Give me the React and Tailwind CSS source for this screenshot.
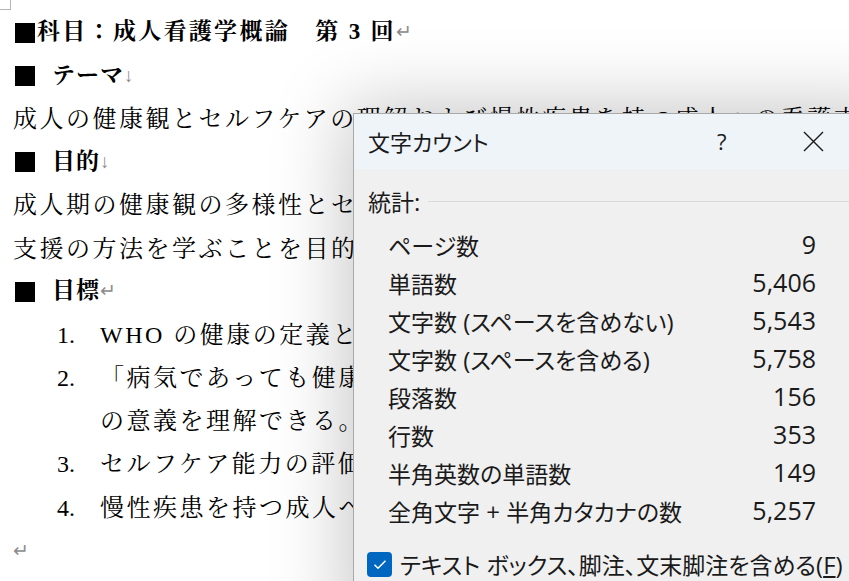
import React from 'react';

const docFont = { fontFamily: '"Liberation Serif", "Noto Serif CJK JP", "Noto Sans CJK JP", serif' };
const uiFont = { fontFamily: '"Noto Sans CJK JP", "Noto Sans", sans-serif', fontFeatureSettings: '"palt"' };
const latin = { fontFamily: '"Open Sans", "Noto Sans", sans-serif' };

function L({ children }) {
  return <span className="text-[24px] leading-none" style={latin}>{children}</span>;
}

const stats = [
  ['ページ数', '9'],
  ['単語数', '5,406'],
  [<>文字数<L> (</L>スペースを含めない<L>)</L></>, '5,543'],
  [<>文字数<L> (</L>スペースを含める<L>)</L></>, '5,758'],
  ['段落数', '156'],
  ['行数', '353'],
  ['半角英数の単語数', '149'],
  [<>全角文字<L> + </L>半角カタカナの数</>, '5,257'],
];

function Mark({ children }) {
  return <span className="text-[#8c8c8c] font-normal tracking-normal text-[19px]">{children}</span>;
}

function Line({ children, className = '' }) {
  return <div className={`h-[43.2px] flex items-center whitespace-nowrap ${className}`}>{children}</div>;
}

function Square() {
  return <span className="inline-block w-[20px] h-[20px] bg-black mr-[17px] ml-[2px]" />;
}

function Item({ n, children }) {
  return (
    <Line className="pl-[44px] text-[24px] tracking-[2.5px]">
      <span className="w-[43px] tracking-normal">{n}.</span>
      <span>{children}</span>
    </Line>
  );
}

export default function App() {
  return (
    <div className="relative w-[849px] h-[581px] overflow-hidden bg-white text-black">
      {/* crop mark */}
      <div className="absolute left-0 top-0 w-[11px] h-[10px] border-r border-b border-[#b5b5b5]" />

      <div className="pt-[11px] pl-[13px]" style={docFont}>
        <Line className="text-[23px] font-bold tracking-[2.3px]">
          <span className="inline-block w-[20px] h-[20px] bg-black ml-[2px] mr-[2px]" />
          科目：成人看護学概論　第 3 回<Mark>↵</Mark>
        </Line>
        <Line className="text-[23px] font-bold tracking-[1px]">
          <Square />テーマ<Mark>↓</Mark>
        </Line>
        <Line className="text-[24px] tracking-[2.5px]">
          成人の健康観とセルフケアの理解および慢性疾患を持つ成人への看護支援
        </Line>
        <Line className="text-[23px] font-bold tracking-[1px]">
          <Square />目的<Mark>↓</Mark>
        </Line>
        <Line className="text-[24px] tracking-[2.5px]">
          成人期の健康観の多様性とセルフケアの概念を理解し、慢性疾患を持つ成人への看護
        </Line>
        <Line className="text-[24px] tracking-[2.5px]">
          支援の方法を学ぶことを目的とする。
        </Line>
        <Line className="text-[23px] font-bold tracking-[1px]">
          <Square />目標<Mark>↵</Mark>
        </Line>
        <Item n="1">WHO の健康の定義と理解し説明できる。</Item>
        <Item n="2">「病気であっても健康である」という考え方</Item>
        <Line className="pl-[87px] text-[24px] tracking-[2.5px]">
          の意義を理解できる。<Mark>↵</Mark>
        </Line>
        <Item n="3">セルフケア能力の評価方法を説明できる。</Item>
        <Item n="4">慢性疾患を持つ成人への看護支援を考察できる。</Item>
        <Line>
          <Mark>↵</Mark>
        </Line>
      </div>

      {/* word count dialog */}
      <div
        className="absolute left-[353px] top-[113px] w-[540px] h-[520px] bg-[#f0f0f0] border border-[#a9a9a9] shadow-[0_0_70px_8px_rgba(0,0,0,0.22)]"
        style={uiFont}
      >
        <div className="h-[55px] bg-[#eff4f9] flex items-center pl-[14px] relative">
          <span className="text-[22px] text-[#1a1a1a]">文字カウント</span>
          <span className="absolute left-[363px] text-[22px] text-[#1a1a1a]" style={latin}>?</span>
          <svg className="absolute left-[449px]" width="21" height="21" viewBox="0 0 21 21">
            <path d="M1 1 L20 20 M20 1 L1 20" stroke="#1a1a1a" strokeWidth="1.4" fill="none" />
          </svg>
        </div>

        <div className="mt-[13px] h-[38px] flex items-center pl-[14px]">
          <span className="text-[23px] text-[#1a1a1a]">統計<L>:</L></span>
          <div className="ml-[8px] flex-1 h-px bg-[#d9d9d9]" />
        </div>

        <div className="mt-[6px] ml-[34px] w-[428px]">
          {stats.map(([label, value], i) => (
            <div key={i} className="h-[38px] flex items-center justify-between text-[23px] text-[#1a1a1a]">
              <span className="whitespace-nowrap">{label}</span>
              <span className="text-[25px]" style={latin}>{value}</span>
            </div>
          ))}
        </div>

        <div className="mt-[15px] h-[38px] flex items-center pl-[13px] gap-[8px]">
          <div className="w-[25px] h-[25px] shrink-0 rounded-[4px] bg-[#0067c0] flex items-center justify-center">
            <svg width="14" height="11" viewBox="0 0 14 11">
              <path d="M1.5 5.8 L5 9.2 L12.5 1.8" stroke="white" strokeWidth="1.6" fill="none" />
            </svg>
          </div>
          <span className="text-[23px] text-[#1a1a1a] whitespace-nowrap">
            テキスト<L> </L>ボックス、脚注、文末脚注を含める<L>(<span className="underline">F</span>)</L>
          </span>
        </div>
      </div>
    </div>
  );
}
